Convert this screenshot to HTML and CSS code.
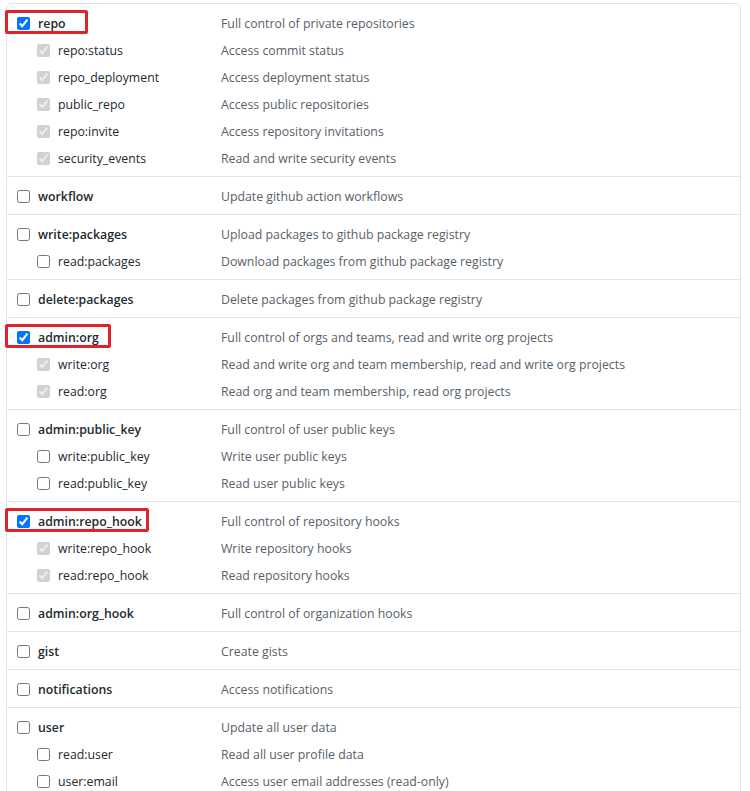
FILE: index.html
```html
<!doctype html>
<html>

<head>
    <title>Scopes</title>
    <meta charset="utf-8">
    <link rel="stylesheet" href="styles.css">
</head>

<body>
    <div class="scopes">
        <div class="group">
            <div class="row">
                <label class="scope"><span class="mark mark-repo"><input type="checkbox" checked><b>repo</b></span></label>
                <span class="desc">Full control of private repositories</span>
            </div>
            <div class="row sub">
                <label class="scope"><input type="checkbox" checked disabled>repo:status</label>
                <span class="desc">Access commit status</span>
            </div>
            <div class="row sub">
                <label class="scope"><input type="checkbox" checked disabled>repo_deployment</label>
                <span class="desc">Access deployment status</span>
            </div>
            <div class="row sub">
                <label class="scope"><input type="checkbox" checked disabled>public_repo</label>
                <span class="desc">Access public repositories</span>
            </div>
            <div class="row sub">
                <label class="scope"><input type="checkbox" checked disabled>repo:invite</label>
                <span class="desc">Access repository invitations</span>
            </div>
            <div class="row sub">
                <label class="scope"><input type="checkbox" checked disabled>security_events</label>
                <span class="desc">Read and write security events</span>
            </div>
        </div>

        <div class="group">
            <div class="row">
                <label class="scope"><input type="checkbox"><b>workflow</b></label>
                <span class="desc">Update github action workflows</span>
            </div>
        </div>

        <div class="group">
            <div class="row">
                <label class="scope"><input type="checkbox"><b>write:packages</b></label>
                <span class="desc">Upload packages to github package registry</span>
            </div>
            <div class="row sub">
                <label class="scope"><input type="checkbox">read:packages</label>
                <span class="desc">Download packages from github package registry</span>
            </div>
        </div>

        <div class="group">
            <div class="row">
                <label class="scope"><input type="checkbox"><b>delete:packages</b></label>
                <span class="desc">Delete packages from github package registry</span>
            </div>
        </div>

        <div class="group">
            <div class="row">
                <label class="scope"><span class="mark mark-org"><input type="checkbox" checked><b>admin:org</b></span></label>
                <span class="desc">Full control of orgs and teams, read and write org projects</span>
            </div>
            <div class="row sub">
                <label class="scope"><input type="checkbox" checked disabled>write:org</label>
                <span class="desc">Read and write org and team membership, read and write org projects</span>
            </div>
            <div class="row sub">
                <label class="scope"><input type="checkbox" checked disabled>read:org</label>
                <span class="desc">Read org and team membership, read org projects</span>
            </div>
        </div>

        <div class="group">
            <div class="row">
                <label class="scope"><input type="checkbox"><b>admin:public_key</b></label>
                <span class="desc">Full control of user public keys</span>
            </div>
            <div class="row sub">
                <label class="scope"><input type="checkbox">write:public_key</label>
                <span class="desc">Write user public keys</span>
            </div>
            <div class="row sub">
                <label class="scope"><input type="checkbox">read:public_key</label>
                <span class="desc">Read user public keys</span>
            </div>
        </div>

        <div class="group">
            <div class="row">
                <label class="scope"><span class="mark mark-hook"><input type="checkbox" checked><b>admin:repo_hook</b></span></label>
                <span class="desc">Full control of repository hooks</span>
            </div>
            <div class="row sub">
                <label class="scope"><input type="checkbox" checked disabled>write:repo_hook</label>
                <span class="desc">Write repository hooks</span>
            </div>
            <div class="row sub">
                <label class="scope"><input type="checkbox" checked disabled>read:repo_hook</label>
                <span class="desc">Read repository hooks</span>
            </div>
        </div>

        <div class="group">
            <div class="row">
                <label class="scope"><input type="checkbox"><b>admin:org_hook</b></label>
                <span class="desc">Full control of organization hooks</span>
            </div>
        </div>

        <div class="group">
            <div class="row">
                <label class="scope"><input type="checkbox"><b>gist</b></label>
                <span class="desc">Create gists</span>
            </div>
        </div>

        <div class="group">
            <div class="row">
                <label class="scope"><input type="checkbox"><b>notifications</b></label>
                <span class="desc">Access notifications</span>
            </div>
        </div>

        <div class="group">
            <div class="row">
                <label class="scope"><input type="checkbox"><b>user</b></label>
                <span class="desc">Update all user data</span>
            </div>
            <div class="row sub">
                <label class="scope"><input type="checkbox">read:user</label>
                <span class="desc">Read all user profile data</span>
            </div>
            <div class="row sub">
                <label class="scope"><input type="checkbox">user:email</label>
                <span class="desc">Access user email addresses (read-only)</span>
            </div>
        </div>
    </div>
</body>

</html>
```

FILE: styles.css
```css
body {
    margin: 0;
    padding: 3px 9px 0 6px;
    font-family: "Segoe UI", "Open Sans", sans-serif;
    font-size: 12.3px;
    color: #24292e;
    background: #fff;
}

.scopes {
    border: 1px solid #e1e4e8;
    border-radius: 6px 6px 0 0;
}

.group {
    padding: 6px 0 4px 10px;
    border-top: 1px solid #e1e4e8;
}

.group:first-child {
    border-top: none;
}

.row {
    display: grid;
    grid-template-columns: 204px 1fr;
    align-items: center;
    height: 27px;
}

.scope {
    display: flex;
    align-items: center;
    gap: 8px;
}

.sub .scope {
    padding-left: 20px;
}

.scope input {
    width: 13px;
    height: 13px;
    margin: 0;
}

.scope b {
    font-weight: 600;
}

.desc {
    color: #586069;
}

.mark {
    position: relative;
    display: flex;
    align-items: center;
    gap: 8px;
}

.mark::after {
    content: "";
    position: absolute;
    top: -5px;
    bottom: -2px;
    left: -12px;
    border: 3px solid #e0232b;
    border-radius: 2px;
}

.mark-repo::after {
    right: -22px;
}

.mark-org::after {
    right: -12px;
}

.mark-hook::after {
    right: -7px;
}
```
